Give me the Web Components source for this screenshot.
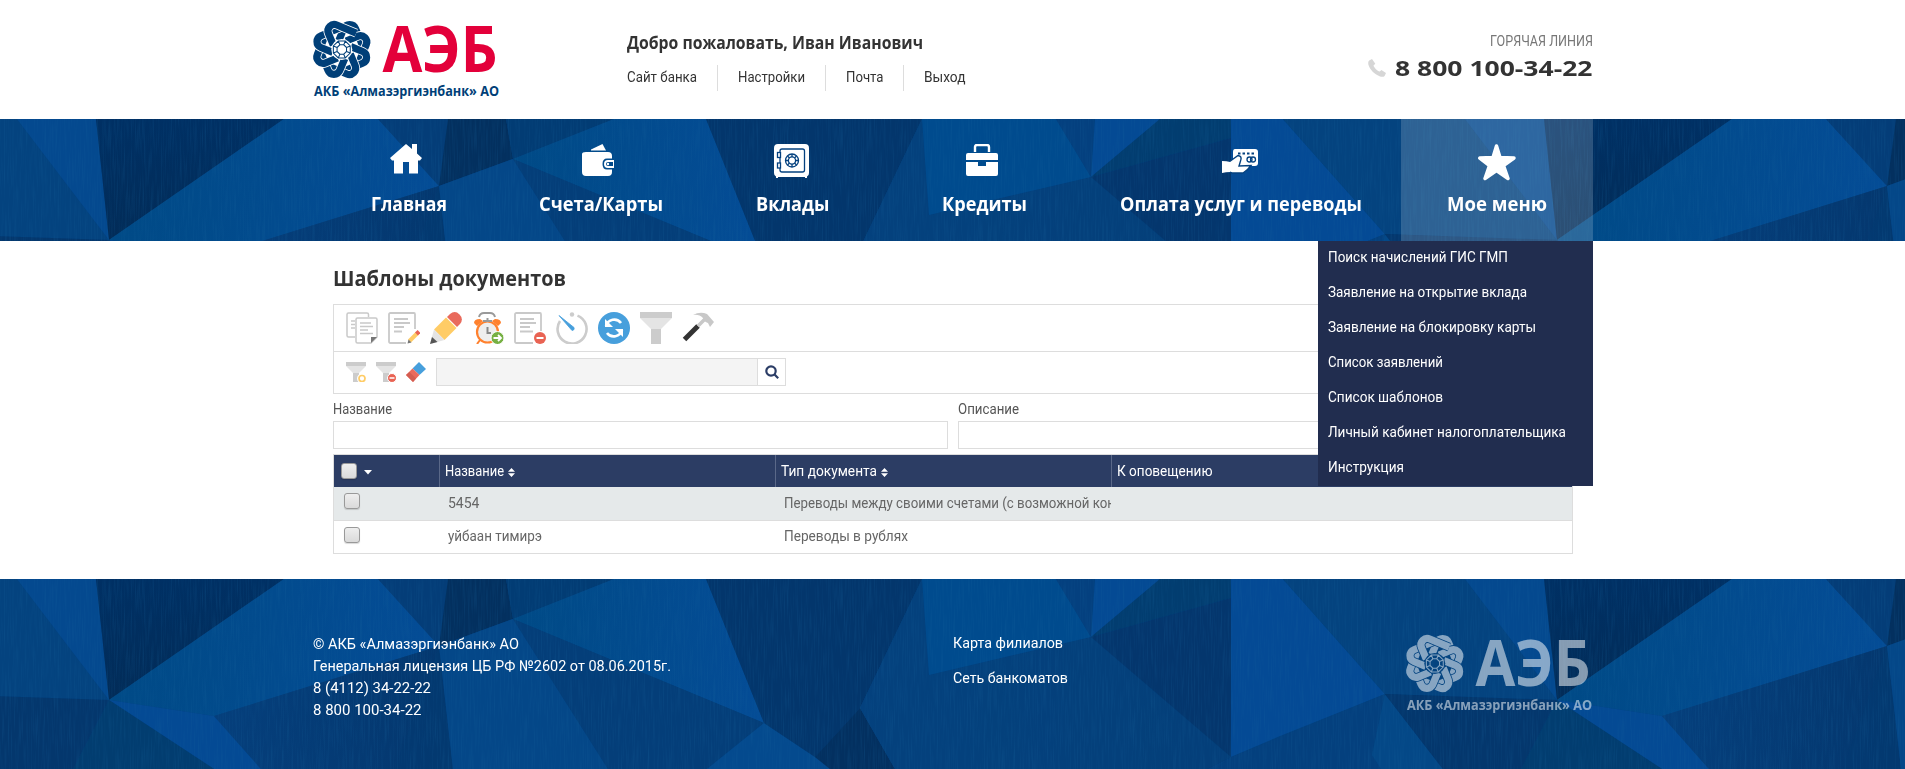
<!DOCTYPE html>
<html lang="ru">
<head>
<meta charset="utf-8">
<title>Шаблоны документов</title>
<style>
body{margin:0;background:#fff;font:15px/20px Roboto,"Liberation Sans",sans-serif;color:#333;height:769px;overflow:hidden}
</style>
</head>
<body>
<bank-page></bank-page>
<script>
function make(name, html, after){
  const tpl=document.createElement('template');
  tpl.innerHTML=html;
  customElements.define(name, class extends HTMLElement{
    connectedCallback(){
      if(this.shadowRoot) return;
      this.attachShadow({mode:'open'}).append(tpl.content.cloneNode(true));
      if(after) after(this,this.shadowRoot);
    }
  });
}

/* Faceted blue backdrop, a 1448px tile repeated across the page */
make('facet-band',`<style>
:host{display:grid}
svg{grid-area:1/1;width:100%;height:100%;display:block;overflow:hidden}
.c{grid-area:1/1;min-width:0;z-index:1}
</style>
<svg aria-hidden="true">
<defs>
<filter id="n" x="0" y="0" width="100%" height="100%" color-interpolation-filters="sRGB"><feTurbulence type="fractalNoise" baseFrequency="0.7 0.03" numOctaves="2" seed="4"/><feColorMatrix values="0 0 0 0 .1  0 0 0 0 .4  0 0 0 0 .62  1.6 0 0 0 -.7"/></filter>
<linearGradient id="a" x1="0" y1="0" x2="1" y2="0"><stop offset="0" stop-color="#004a86"/><stop offset="1" stop-color="#044c96"/></linearGradient>
<linearGradient id="b" x1="0" y1="0" x2="1" y2="0"><stop offset="0" stop-color="#053f7c"/><stop offset="1" stop-color="#04376e"/></linearGradient>
<linearGradient id="d" x1="0" y1="0" x2="0" y2="1"><stop offset="0" stop-color="#003064"/><stop offset="1" stop-color="#022c58"/></linearGradient>
<g id="t">
<rect width="1449" height="190" fill="#04417f"/>
<path fill="#04437f" d="M-63 115-165 0H17L109 121z"/>
<path fill="#04498f" d="M17 0H96L109 121z"/>
<path fill="url(#d)" d="M96 0H284L109 121z"/>
<path fill="url(#a)" d="M284 0H378L439 67 214 137 109 121z"/>
<path fill="#044a94" d="M109 121 214 137 261 190H214z"/>
<path fill="#023d70" d="M109 121 214 190H73z"/>
<path fill="#04376d" d="M-63 115 109 121 73 190H-5z"/>
<path fill="url(#b)" d="M214 137 439 67 453 190H261z"/>
<path fill="#043a72" d="M439 67 453 190H395z" opacity=".6"/>
<path fill="#043d78" d="M378 0H448L439 67z"/>
<path fill="#03305f" d="M448 0H506L513 40 439 67z"/>
<path fill="#023c74" d="M506 0H614L513 40z"/>
<path fill="#044788" d="M439 67 513 40 608 190H453z"/>
<path fill="url(#a)" d="M513 40 614 0H706L764 144z"/>
<path fill="#043e79" d="M513 40 764 144 707 190H608z"/>
<path fill="#044a8e" d="M764 144 815 178 830 190H707z"/>
<path fill="#03366c" d="M706 0H922L860 129 815 178 764 144z"/>
<path fill="#033060" d="M860 129 895 190H830L815 178z"/>
<path fill="url(#b)" d="M922 0 929 96 1091 58 1231 178 1207 190H895L860 129z"/>
<path fill="#04437f" d="M922 0 929 96 1091 58 1231 178 1207 190H895L860 129z" opacity=".7"/>
<path fill="#004b8e" d="M922 0H1056L1091 58 929 96z"/>
<path fill="#04407f" d="M1056 0H1095L1091 58z"/>
<path fill="#044a94" d="M1095 0H1160L1091 58z"/>
<path fill="#023d70" d="M1160 0H1231V19L1091 58z"/>
<path fill="#04366d" d="M1231 19V178L1091 58z"/>
<path fill="#044a95" d="M1231 0H1283L1385 115 1280 157 1231 178z"/>
<path fill="#04407e" d="M1231 178 1385 115 1372 176 1381 190H1215z"/>
<path fill="#044887" d="M1385 115 1443 190H1381L1372 176z"/>
<path fill="#04437f" d="M1283 0H1466L1557 121 1385 115z"/>
<path fill="#04376d" d="M1385 115 1557 121 1520 190H1443z"/>
</g>
</defs>
<use href="#t"/><use href="#t" x="1448"/>
<rect width="100%" height="100%" filter="url(#n)" opacity=".32"/>
</svg>
<div class="c"><slot></slot></div>`);

make('bank-logo',`<style>
:host{display:block;width:187px;height:80px;color:#003f78;--word:#e3003a}
svg{display:block;overflow:visible}
text{font-family:"Open Sans","Noto Sans",sans-serif;font-weight:700}
</style>
<svg width="187" height="80" viewBox="0 0 187 80">
<defs>
<mask id="m" maskUnits="userSpaceOnUse" x="-32" y="-32" width="64" height="64">
<g id="petals" fill="none" stroke-linecap="butt"></g>
</mask>
</defs>
<g transform="translate(28.800 29.5) scale(1.030)">
<rect x="-32" y="-32" width="64" height="64" fill="currentColor" mask="url(#m)"/>
<g fill="none" stroke="currentColor" stroke-width="1"><path id="gem"/></g>
</g>
<text x="69.5" y="52" font-size="64" textLength="115" lengthAdjust="spacingAndGlyphs" fill="var(--word)">АЭБ</text>
<text x="1" y="75.500" font-size="13.5" textLength="185" lengthAdjust="spacingAndGlyphs" fill="currentColor">АКБ «Алмазэргиэнбанк» АО</text>
</svg>`,(h,r)=>{
  let s='';
  const d='M-6 -7 V-19.500 A6.200 6.200 0 0 1 4.600 -23.800 L19 -9.400';
  for(let i=0;i<8;i++){
    const t=`transform="rotate(${22.5+45*i})"`;
    s+=`<path ${t} d="${d}" stroke="#000" stroke-width="8.600"/><path ${t} d="${d}" stroke="#fff" stroke-width="7"/>`;
  }
  s+='<circle r="10.2" fill="#000"/>';
  r.getElementById('petals').innerHTML=s;
  let g='',p=(R,i)=>{const a=(22.5+45*i)*Math.PI/180;return (R*Math.cos(a)).toFixed(1)+' '+(R*Math.sin(a)).toFixed(1)};
  for(const R of [8.9,5]){ g+='M'+p(R,0); for(let i=1;i<8;i++) g+='L'+p(R,i); g+='z'; }
  for(let i=0;i<8;i++) g+='M'+p(5,i)+'L'+p(8.9,i);
  r.getElementById('gem').setAttribute('d',g);
});

make('top-header',`<style>
:host{display:block;height:119px}
.w{width:1280px;margin:0 auto;display:grid;grid-template-columns:314px 1fr auto;height:119px}
bank-logo{margin-top:20px}
.hi{margin-top:32px;font:700 17px/22px "Open Sans","Noto Sans",sans-serif;color:#333;height:22px}
.links{display:flex;margin-top:11px;height:26px;line-height:24px}
.links span{padding:0 20px;border-left:1px solid #ddd}
.links span:first-child{padding-left:0;border:0}
.r{display:flex;flex-direction:column;align-items:flex-end}
.hot{margin-top:31px;color:#777;font-size:14px;line-height:20px;height:20px}
.ph{display:flex;align-items:center;gap:9px;height:32px;margin-top:1px;font:700 20.5px/32px "Open Sans",sans-serif}
</style>
<div class="w"><bank-logo></bank-logo>
<div><div class="hi"><fit-text w="296">Добро пожаловать, Иван Иванович</fit-text></div>
<div class="links"><span><fit-text w="70">Сайт банка</fit-text></span><span><fit-text w="67">Настройки</fit-text></span><span><fit-text w="37.5">Почта</fit-text></span><span><fit-text w="41.5">Выход</fit-text></span></div></div>
<div class="r"><div class="hot"><fit-text w="103">ГОРЯЧАЯ ЛИНИЯ</fit-text></div>
<div class="ph"><svg width="18" height="18" viewBox="0 0 18 18"><path fill="#d6d6d6" d="M1.2 1.6 4 .1 7.3 4.8 5.5 6.4C6.2 8.700 9.300 11.800 11.800 12.500L13.400 11 18 14 16.600 17C15.500 18.200 13.500 18 11.500 17.200 6.500 15.200 2 10.800.500 6 0 4.200.100 2.500 1.200 1.600z"/></svg><fit-text w="197.500">8 800 100-34-22</fit-text></div></div></div>`);

make('nav-item',`<style>
:host{display:flex;flex-direction:column;align-items:center;height:122px;color:#fff;font:700 19px/26px "Open Sans","Noto Sans",sans-serif}
:host([active]){background:rgba(255,255,255,.17)}
.i{margin-top:25px;width:38px;height:38px}
.t{margin-top:9px;height:26px}
::slotted(svg){display:block}
</style><div class="i"><slot name="icon"></slot></div><div class="t"><slot></slot></div>`);

make('main-nav',`<style>
:host{display:block;height:122px;position:relative;z-index:3}
facet-band{height:122px}
.w{position:relative;width:1280px;margin:0 auto;display:grid;grid-template-columns:192px 192px 192px 192px 320px 192px}
side-menu{position:absolute;right:0;top:122px;z-index:5}
</style>
<facet-band><div class="w">
<nav-item><svg slot="icon" width="38" height="38" fill="#fff"><path d="M16 0 22 5V0H27V9.500L32 14 30 16.500H28V29.500H19V18H13V29.500H4V16.500H2L0 14z"/></svg><fit-text w="76">Главная</fit-text></nav-item>
<nav-item><svg slot="icon" width="38" height="38" fill="#fff"><path d="M9 5.500 20.500 0 24 6.500H9z"/><path d="M4 8H26Q30 8 30 12V14.500H25Q20.500 14.500 20.500 20T25 25.500H30V28Q30 32 26 32H4Q0 32 0 28V10Q0 8 4 8z"/><path fill-rule="evenodd" d="M26 16H32V24H26Q22 24 22 20T26 16M26 18Q24 18 24 20T26 22H31V18z"/><circle cx="26" cy="20" r="1.200"/></svg><fit-text w="124">Счета/Карты</fit-text></nav-item>
<nav-item><svg slot="icon" width="38" height="38"><path fill="#fff" d="M4 0H31Q35 0 35 4V29Q35 32 33 32.500V34H31V33H4V34H2V32.500Q0 32 0 29V4Q0 0 4 0"/><g fill="none" stroke="#04417f" stroke-width="1.300"><rect x="6" y="5" width="24.500" height="23" rx="2"/><rect x="3.500" y="8.500" width="3" height="5" fill="#fff"/><rect x="3.500" y="19" width="3" height="5" fill="#fff"/><circle cx="18" cy="16.500" r="6.500"/><circle cx="18" cy="16.500" r="3.600"/><path d="M18 10V13M18 20V23M11.500 16.500H14.500M21.500 16.500H24.500M13.500 12 15.500 14M20.500 19 22.500 21M22.500 12 20.500 14M15.500 19 13.500 21"/></g></svg><fit-text w="73.500">Вклады</fit-text></nav-item>
<nav-item><svg slot="icon" width="38" height="38" fill="#fff"><path d="M9 8V3Q9 1 11 1H21Q23 1 23 3V8" fill="none" stroke="#fff" stroke-width="2.400"/><path d="M2 9H30Q32 9 32 11V16H0V11Q0 9 2 9M0 18H12V22H20V18H32V30Q32 32 30 32H2Q0 32 0 30z"/></svg><fit-text w="85">Кредиты</fit-text></nav-item>
<nav-item><svg slot="icon" width="38" height="38" fill="#fff"><path d="M13 5H33Q36 5 36 8V19Q36 22 33 22H11V8Q11 5 13 5"/><g stroke="#04417f" fill="none" stroke-width="1.300"><path d="M16 9.500H34" stroke-width="1.800" stroke-dasharray="2.500 2"/><circle cx="27.500" cy="15.500" r="2.500"/><circle cx="31" cy="15.500" r="2.500"/></g><path stroke="#04417f" stroke-width="1.400" d="M7 18 16 11.500Q20.500 12 18.500 17L17 22 29 21.500Q26 26 21 29H10L7 28z"/><path d="M0 17Q5 17 8 18V28Q4 28 0 29z"/></svg><fit-text w="242">Оплата услуг и переводы</fit-text></nav-item>
<nav-item active><svg slot="icon" width="38" height="38"><path fill="#fff" stroke="#fff" stroke-width="3.500" stroke-linejoin="round" d="M18.500 2 22 13.500 36 14 25.500 21.500 30 34.500 18.500 26.500 7 34.500 11.500 21.500 1.800 14 15 13.500z"/></svg><fit-text w="100">Мое меню</fit-text></nav-item>
<side-menu></side-menu>
</div></facet-band>`);

make('side-menu',`<style>
:host{display:block;width:275px;height:245px;background:#212d4f;color:#fff}
a{display:block;height:35px;line-height:32px;padding-left:10px}
</style>
<a><fit-text w="180">Поиск начислений ГИС ГМП</fit-text></a><a><fit-text w="199">Заявление на открытие вклада</fit-text></a><a><fit-text w="208">Заявление на блокировку карты</fit-text></a><a><fit-text w="115">Список заявлений</fit-text></a><a><fit-text w="115">Список шаблонов</fit-text></a><a><fit-text w="238">Личный кабинет налогоплательщика</fit-text></a><a><fit-text w="76">Инструкция</fit-text></a>`);

make('tool-bar',`<style>
:host{display:block;border:1px solid #ddd;height:88px}
.a,.b{display:flex;padding-left:12px;box-sizing:border-box}
.a{height:47px;border-bottom:1px solid #ddd;gap:10px;padding-top:7px}
.b{height:41px;gap:10px;padding-top:10px}
svg{display:block;flex:none}
.s{display:flex;margin-top:-4px;width:348px;height:26px;border:1px solid #ddd}
.s i{box-sizing:border-box;width:321px;background:#f4f4f4;border-right:1px solid #ddd}
.s svg{margin:6px 0 0 7px}
</style>
<div class="a">
<svg width="32" height="32" fill="none" stroke="#c9c9c9" stroke-width="1.500"><path d="M9 25H2.500Q1 25 1 23.500V2.500Q1 1 2.500 1H21Q22.500 1 22.500 2.500V5M5 9H9M5 12.500H9M5 16H9"/><path fill="#fff" d="M11.500 6H29.500Q31 6 31 7.500V25L25 31H11.500Q10 31 10 29.500V7.500Q10 6 11.500 6"/><path d="M14 11H25M14 14.500H27M14 18H22M14 21.500H27"/><path fill="#777" stroke="none" d="M25 31V25H31z"/></svg>
<svg width="32" height="32" fill="none" stroke="#c9c9c9" stroke-width="1.800"><path d="M18 31H2.500Q1 31 1 29.500V2.500Q1 1 2.500 1H26Q27 1 27 2.500V17M6 7H20M6 11H22M6 15H16M6 19.500H14"/><path d="M21.500 29 29.500 21" stroke="#fc6" stroke-width="4"/><path d="M28.500 22 31 19.500" stroke="#e96353" stroke-width="4"/><path fill="#777" stroke="none" d="M19.500 31.500 20.500 27.500 23.500 30.500z"/></svg>
<svg width="32" height="32"><path fill="#e96a5c" d="M17 5 20 2Q25-2 29.500 2.500T30 12L27 15z"/><path fill="#fc6" d="M16 5.500 26.500 16 14.500 28 4 17.500z"/><path fill="#e4e4e4" d="M4 17.500 14.500 28 0 32z"/><path fill="#555" d="M2 25 7.500 30 0 32z"/></svg>
<svg width="32" height="32" fill="none"><path d="M7 5Q8 1 12 1H18Q22 1 23 5" stroke="#999" stroke-width="2"/><path d="M2 11Q2 7 8 7L11 9 5 14zM29 11Q29 7 23 7L20 9 26 14z" fill="#ff812e"/><circle cx="15.500" cy="20" r="10.500" fill="#eee" stroke="#ff812e" stroke-width="2.200"/><path d="M15.500 6V10M11 9H20" stroke="#999" stroke-width="2"/><path d="M15.500 15V21H19" stroke="#888" stroke-width="2"/><path d="M8 28 5 32M22 29 24 31" stroke="#ff812e" stroke-width="2"/><circle cx="25.500" cy="26" r="6.500" fill="#76b043" stroke="#fff"/><path d="M21.500 26H28.500M26 23 29 26 26 29" stroke="#fff" stroke-width="1.800"/></svg>
<svg width="32" height="32" fill="none" stroke="#c9c9c9" stroke-width="1.800"><path d="M19 31H2.500Q1 31 1 29.500V2.500Q1 1 2.500 1H26Q27 1 27 2.500V19M6 7H20M6 11H22M6 15H16M6 19.500H19"/><circle cx="26" cy="26" r="6" fill="#e96353" stroke="none"/><path d="M22.500 26H29.500" stroke="#fff" stroke-width="2"/></svg>
<svg width="32" height="32" fill="none"><path d="M21.500 3.600A14.500 14.500 0 1 1 4 9" stroke="#ccc" stroke-width="2.600"/><circle cx="16" cy="2.500" r="2.200" fill="#ccc"/><path fill="#479fdc" d="M3 3.500 18 15.500Q19 18 16 18.500z" stroke="#479fdc" stroke-width=".8"/></svg>
<svg width="32" height="32" fill="none"><circle cx="16" cy="16" r="16" fill="#479fdc"/><path d="M8 14A8.500 8.500 0 0 1 23 11M24 18A8.500 8.500 0 0 1 9 21" stroke="#fff" stroke-width="2.600"/><path fill="#fff" d="M7 7V15H15zM25 25V17H17z"/></svg>
<svg width="32" height="32"><path fill="#ccc" d="M0 0H32V6H0zM11 16H21V32H11z"/><path fill="#e4e4e4" d="M0 6H32L21 17H11z"/></svg>
<svg width="32" height="32" fill="none"><path d="M2.500 27.500 16 14" stroke="#333" stroke-width="5"/><path d="M16 14 23 7" stroke="#c8c8c8" stroke-width="3.500"/><path fill="#c8c8c8" d="M11 3Q18-1 25 2L32 10 28 15 26 11Q22 10 21 6 17 2 11 3"/></svg>
</div>
<div class="b">
<svg width="20" height="20"><path fill="#ccc" d="M0 0H20V4H0zM7 10H13V20H7z"/><path fill="#e4e4e4" d="M0 4H20L13 11H7z"/><circle cx="16" cy="16.500" r="3" fill="#fff" stroke="#fff" stroke-width="4"/><circle cx="16" cy="16.500" r="3" fill="#fff" stroke="#fc6" stroke-width="1.700"/></svg>
<svg width="20" height="20"><path fill="#ccc" d="M0 0H20V4H0zM7 10H13V20H7z"/><path fill="#e4e4e4" d="M0 4H20L13 11H7z"/><circle cx="16" cy="16" r="4.500" fill="#e96353" stroke="#fff"/><path d="M13.500 16H18.500" stroke="#fff" stroke-width="1.500"/></svg>
<svg width="20" height="20"><path fill="#479fdc" d="M13 0 20 7 13.500 13 6.500 6.500z"/><path fill="#e96a5c" d="M6.500 6.500 13.500 13 7 20 0 13z"/><path fill="#d45d51" d="M3.500 10 10 16.500 7 20 0 13z"/></svg>
<div class="s"><i></i><svg width="14" height="14" fill="none" stroke="#2b3d66" stroke-width="2.200"><circle cx="6" cy="6" r="4.700"/><path d="M9.300 9.300 13.200 13.200"/></svg></div>
</div>`);

make('filter-field',`<style>
:host{display:block;color:#555}
.l{height:27px;line-height:31px}
.b{height:26px;border:1px solid #ddd}
</style><div class="l"><slot></slot></div><div class="b"></div>`);

make('check-box',`<style>
:host{display:block;box-sizing:border-box;width:16px;height:16px;border:1px solid #999;border-radius:3px;background:linear-gradient(#eee,#dadada);box-shadow:0 1px 1px rgba(0,0,0,.15)}
</style>`);

make('doc-table',`<style>
:host{display:block;border:1px solid #ddd;height:98px}
.r{display:grid;grid-template-columns:105px 336px 336px 1fr;box-sizing:border-box}
.h{height:32px;background:#2c3d64;color:#fff;line-height:32px}
.h>div{display:flex;align-items:center;padding-left:5px;border-left:1px solid #5a6888}
.h>div:first-child{border:0;padding-left:7px;gap:7px}
.h svg{margin:2px 0 0 4px}
.d{height:34px;background:#e5e9ea;border-bottom:1px solid #ddd;color:#666;line-height:33px}
.e{height:32px;background:#fff;color:#666;line-height:31px}
.d>div,.e>div{overflow:hidden;padding-left:9px;white-space:nowrap}
.d check-box,.e check-box{margin:6px 0 0 1px}
</style>
<div class="r h"><div><check-box></check-box><svg width="8" height="5" fill="#fff" style="margin:2px 0 0"><path d="M0 0H8L4 4.500z"/></svg></div>
<div><fit-text w="59">Название</fit-text><svg width="7" height="9" fill="#fff"><path d="M0 3.700 3.500 0 7 3.700zM0 5.300H7L3.500 9z"/></svg></div>
<div><fit-text w="96">Тип документа</fit-text><svg width="7" height="9" fill="#fff"><path d="M0 3.700 3.500 0 7 3.700zM0 5.300H7L3.500 9z"/></svg></div>
<div><fit-text w="95.5">К оповещению</fit-text></div></div>
<div class="r d"><div><check-box></check-box></div><div><fit-text w="31.5">5454</fit-text></div><div><fit-text w="331">Переводы между своими счетами (с возможной кон</fit-text></div><div></div></div>
<div class="r e"><div><check-box></check-box></div><div><fit-text w="94">уйбаан тимирэ</fit-text></div><div><fit-text w="124">Переводы в рублях</fit-text></div><div></div></div>`);

make('doc-panel',`<style>
:host{display:block;width:1240px;margin:0 auto;height:338px}
h1{margin:0;padding-top:24px;height:39px;font:700 21px/27px "Open Sans","Noto Sans",sans-serif;color:#333}
.f{display:grid;grid-template-columns:615px 615px;gap:10px;height:60px}
doc-table{box-sizing:border-box;height:100px}
</style>
<h1><fit-text w="233">Шаблоны документов</fit-text></h1>
<tool-bar></tool-bar>
<div class="f"><filter-field><fit-text w="59">Название</fit-text></filter-field><filter-field><fit-text w="61">Описание</fit-text></filter-field></div>
<doc-table></doc-table>`);

make('page-footer',`<style>
:host{display:block;height:190px;color:#fff}
facet-band{height:190px}
.w{width:1280px;margin:0 auto;display:grid;grid-template-columns:640px 1fr 187px}
.l{padding-top:54px;line-height:22px}
.l div{height:22px}
.m{padding-top:47px;line-height:35px}
.m div{height:35px}
bank-logo{color:#fff;--word:#fff;margin-top:55px;opacity:.52}
</style>
<facet-band><div class="w">
<div class="l"><div><fit-text w="206">© АКБ «Алмазэргиэнбанк» АО</fit-text></div><div><fit-text w="358">Генеральная лицензия ЦБ РФ №2602 от 08.06.2015г.</fit-text></div><div><fit-text w="118">8 (4112) 34-22-22</fit-text></div><div><fit-text w="108.500">8 800 100-34-22</fit-text></div></div>
<div class="m"><div><fit-text w="110">Карта филиалов</fit-text></div><div><fit-text w="115">Сеть банкоматов</fit-text></div></div>
<bank-logo></bank-logo></div></facet-band>`);

make('bank-page',`<style>:host{display:flex;flex-direction:column}</style>
<top-header></top-header><main-nav></main-nav><doc-panel></doc-panel><page-footer></page-footer>`);

/* Label whose letters are condensed or widened to the given width */
make('fit-text',`<style>:host{display:inline-block;white-space:nowrap;vertical-align:top}span{display:inline-block;transform-origin:0 50%;vertical-align:top}</style><span><slot></slot></span>`,(h,r)=>{
  const w=parseFloat(h.getAttribute('w')), s=r.querySelector('span');
  const k=w/s.getBoundingClientRect().width;
  h.style.width=w+'px';
  s.style.transform='scaleX('+k.toFixed(4)+')';
});
</script>
</body>
</html>
